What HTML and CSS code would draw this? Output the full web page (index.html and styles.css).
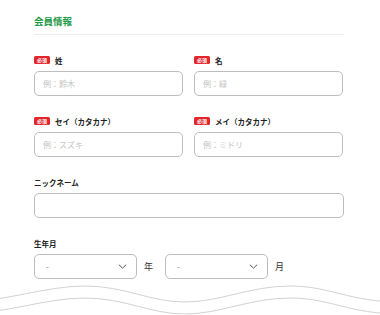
FILE: index.html
```html
<!DOCTYPE html>
<html lang="ja">
<head>
    <meta charset="UTF-8">
    <meta name="viewport" content="width=device-width, initial-scale=1.0">
    <title>会員情報</title>
    <link rel="stylesheet" href="styles.css">
</head>
<body>
    <div class="member-form">
        <h2 class="section-title">会員情報</h2>

        <div class="row-2col">
            <div class="field">
                <div class="field-label"><span class="badge-required">必須</span>姓</div>
                <input type="text" class="text-input" placeholder="例：鈴木">
            </div>
            <div class="field">
                <div class="field-label"><span class="badge-required">必須</span>名</div>
                <input type="text" class="text-input" placeholder="例：緑">
            </div>
        </div>

        <div class="row-2col">
            <div class="field">
                <div class="field-label"><span class="badge-required">必須</span>セイ（カタカナ）</div>
                <input type="text" class="text-input" placeholder="例：スズキ">
            </div>
            <div class="field">
                <div class="field-label"><span class="badge-required">必須</span>メイ（カタカナ）</div>
                <input type="text" class="text-input" placeholder="例：ミドリ">
            </div>
        </div>

        <div class="field">
            <div class="field-label">ニックネーム</div>
            <input type="text" class="text-input">
        </div>

        <div class="field">
            <div class="field-label">生年月</div>
            <div class="birth-row">
                <div class="select-box">
                    <span>-</span>
                    <svg class="chevron" width="9" height="5" viewBox="0 0 9 5"><path d="M0.8 0.6 L4.5 4.2 L8.2 0.6" fill="none" stroke="#555" stroke-width="1"/></svg>
                </div>
                <span class="unit">年</span>
                <div class="select-box">
                    <span>-</span>
                    <svg class="chevron" width="9" height="5" viewBox="0 0 9 5"><path d="M0.8 0.6 L4.5 4.2 L8.2 0.6" fill="none" stroke="#555" stroke-width="1"/></svg>
                </div>
                <span class="unit">月</span>
            </div>
        </div>
    </div>

    <!-- torn edge -->
    <svg class="wave" width="380" height="32" viewBox="0 283 380 32">
        <path d="M-40 302 C5 302 45 286 85 286 S150 302 185 302 S250 286 290 286 S350 302 400 302" fill="none" stroke="#d2d2d2" stroke-width="1"/>
        <path d="M-40 314 C5 314 45 298 85 298 S150 314 185 314 S250 298 290 298 S350 314 400 314" fill="none" stroke="#d2d2d2" stroke-width="1"/>
    </svg>
</body>
</html>
```

FILE: styles.css
```css
* {
    margin: 0;
    padding: 0;
    box-sizing: border-box;
}

body {
    font-family: "Noto Sans CJK JP", "Noto Sans", sans-serif;
    background-color: #fff;
    color: #222;
    width: 380px;
    overflow: hidden;
}

.member-form {
    width: 344px;
    padding: 14px 0 0 34px;
}

.section-title {
    font-size: 9.5px;
    line-height: 14px;
    font-weight: bold;
    color: #1d9a48;
    padding-bottom: 6px;
    border-bottom: 1px solid #eeeeee;
}

.row-2col {
    display: grid;
    grid-template-columns: 149px 149px;
    gap: 11px;
}

.field {
    margin-top: 20px;
}

.field-label {
    display: flex;
    align-items: center;
    height: 10px;
    font-size: 7.5px;
    font-weight: bold;
    margin-bottom: 6px;
}

.badge-required {
    display: inline-block;
    width: 16px;
    height: 8px;
    line-height: 8px;
    margin-right: 5px;
    background-color: #e3262c;
    color: #fff;
    font-size: 5px;
    text-align: center;
    border-radius: 1.5px;
}

.text-input {
    display: block;
    width: 100%;
    height: 25px;
    padding: 0 8px;
    border: 1.5px solid #bdbdbd;
    border-radius: 5px;
    font-family: inherit;
    font-size: 8px;
    color: #333;
    background-color: #fff;
}

.text-input::placeholder {
    color: #c4c4c4;
}

.birth-row {
    display: flex;
    align-items: center;
}

.select-box {
    display: flex;
    align-items: center;
    justify-content: space-between;
    width: 103px;
    height: 25px;
    padding: 0 9px 0 11px;
    border: 1.5px solid #bdbdbd;
    border-radius: 5px;
    font-size: 8px;
    color: #777;
}

.unit {
    font-size: 9px;
    color: #333;
    margin: 0 12px 0 7px;
}

.wave {
    display: block;
    margin-top: 4px;
}
```
